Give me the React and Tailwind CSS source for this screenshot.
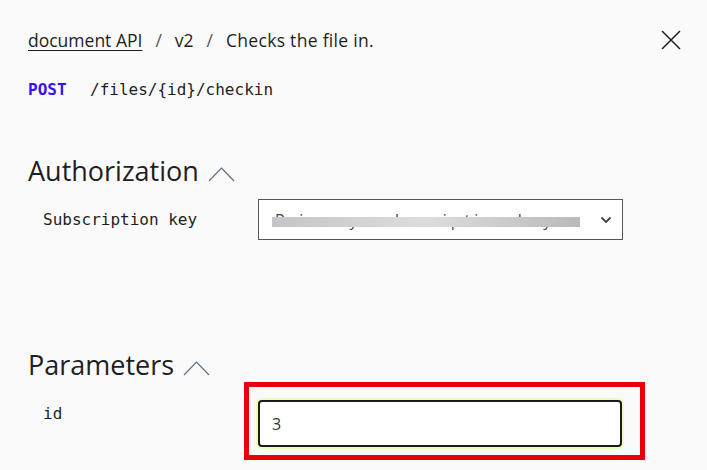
import { useState } from 'react';

const sans = { fontFamily: '"Open Sans", "Noto Sans", sans-serif' };
const mono = { fontFamily: '"DejaVu Sans Mono", "Liberation Mono", monospace' };

function ChevronUp({ className }) {
  return (
    <svg className={className} width="27" height="16" viewBox="0 0 27 16" fill="none">
      <path d="M1 15 L13.5 2 L26 15" stroke="#5b6f86" strokeWidth="1.2" />
    </svg>
  );
}

export default function App() {
  const [id, setId] = useState('3');

  return (
    <div className="w-[707px] h-[470px] overflow-hidden bg-[#fafafa] text-[#1e1e1e] relative" style={sans}>
      <div className="pl-[28px] pr-[26px] pt-[28px]">
        {/* breadcrumb */}
        <div className="flex items-center justify-between h-[24px]">
          <div className="flex items-center text-[17.5px] leading-[24px]">
            <a className="underline underline-offset-[3px] decoration-1">document API</a>
            <span className="mx-[13px] text-[#555]">/</span>
            <span>v2</span>
            <span className="mx-[13px] text-[#555]">/</span>
            <span className="tracking-[0.3px]">Checks the file in.</span>
          </div>
          <svg width="20" height="20" viewBox="0 0 20 20" fill="none">
            <path d="M1 1 L19 19 M19 1 L1 19" stroke="#1e1e1e" strokeWidth="1.5" />
          </svg>
        </div>

        <div className="flex items-center mt-[26px] h-[24px] text-[16px] leading-[24px]" style={mono}>
          <span className="font-bold text-[#3a10f5] w-[62px]">POST</span>
          <span>/files/{'{id}'}/checkin</span>
        </div>

        {/* authorization */}
        <div className="flex items-center mt-[51px] h-[36px]">
          <h2 className="text-[27px] leading-[36px] font-normal">Authorization</h2>
          <ChevronUp className="ml-[9px] mt-[6px]" />
        </div>
        <div className="flex mt-[10px] pl-[15px]">
          <div className="w-[215px] pt-[9px] text-[16px] leading-[24px]" style={mono}>Subscription key</div>
          <div className="relative w-[365px] h-[41px] border border-[#555] bg-white flex items-center justify-between pl-[16px] pr-[10px]">
            <span className="text-[16px] text-[#444] tracking-[4px] whitespace-nowrap">Primary subscription key</span>
            <div className="absolute left-[13px] top-[17px] w-[308px] h-[10px] bg-gradient-to-r from-[#c4c5c7] via-[#dcdddd] to-[#b9babc]" />
            <svg width="12" height="8" viewBox="0 0 12 8" fill="none">
              <path d="M1.5 1.5 L6 6 L10.5 1.5" stroke="#444" strokeWidth="1.8" />
            </svg>
          </div>
        </div>

        {/* parameters */}
        <div className="flex items-center mt-[107px] h-[36px]">
          <h2 className="text-[27px] leading-[36px] font-normal">Parameters</h2>
          <ChevronUp className="ml-[9px] mt-[6px]" />
        </div>
        <div className="flex mt-[17px] pl-[15px]">
          <div className="w-[215px] pt-[2px] text-[16px] leading-[24px]" style={mono}>id</div>
          <div className="relative">
            <input
              value={id}
              onChange={(e) => setId(e.target.value)}
              className="w-[364px] h-[47px] border-2 border-[#1a1a1a] rounded-[4px] bg-white px-[12px] text-[16px] text-[#333] outline-none shadow-[0_0_0_2px_#f1f8b8]"
              style={sans}
            />
            <div className="absolute left-[-14px] top-[-18px] w-[401px] h-[78px] border-[5px] border-[#e8000b] pointer-events-none" />
          </div>
        </div>
      </div>
    </div>
  );
}
